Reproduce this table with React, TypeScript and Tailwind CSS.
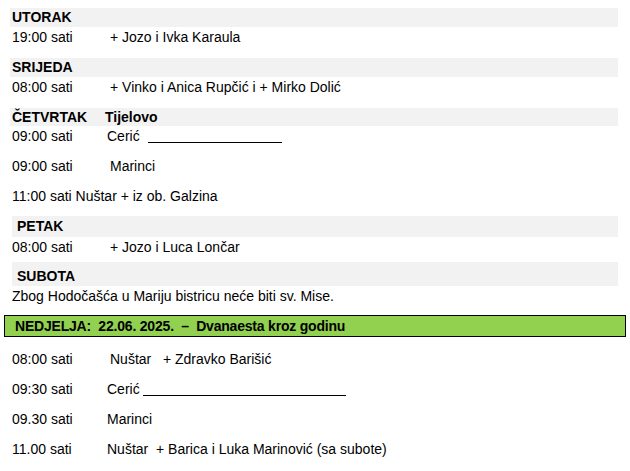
const font = { fontFamily: '"Liberation Sans", Arial, sans-serif' };

const DayBar = ({ children, className = "" }: { children: React.ReactNode; className?: string }) => (
  <div className={`flex items-center bg-[#f2f2f2] font-bold text-[14px] text-black ${className}`}>
    {children}
  </div>
);

const Row = ({ time, children, className = "" }: { time: string; children?: React.ReactNode; className?: string }) => (
  <div className={`flex items-center h-[20px] text-[14px] text-black ${className}`}>
    <span className="w-[98px] shrink-0">{time}</span>
    {children}
  </div>
);

export default function App() {
  return (
    <div className="w-[630px] h-[471px] bg-white overflow-hidden" style={font}>
      <div className="pt-[8px] pl-[10px] pr-[12px]">
        <DayBar className="h-[19px] pl-[2px]">UTORAK</DayBar>
        <Row time="19:00 sati" className="pl-[2px]">+ Jozo i Ivka Karaula</Row>

        <DayBar className="h-[19px] pl-[2px] mt-[11px]">SRIJEDA</DayBar>
        <Row time="08:00 sati" className="pl-[2px]">+ Vinko i Anica Rupčić i + Mirko Dolić</Row>

        <DayBar className="h-[18px] pl-[2px] mt-[11px]">
          <span className="w-[93px]">ČETVRTAK</span>
          <span>Tijelovo</span>
        </DayBar>
        <Row time="09:00 sati" className="pl-[2px]">
          <span className="-ml-[3px]">Cerić</span>
          <span className="ml-[8px] inline-block w-[134px] border-b border-black h-[14px]" />
        </Row>
        <Row time="09:00 sati" className="pl-[2px] mt-[10px]">Marinci</Row>
        <div className="flex items-center h-[20px] mt-[10px] pl-[2px] text-[14px]">11:00 sati Nuštar + iz ob. Galzina</div>

        <DayBar className="h-[21px] pl-[5px] mt-[10px] ml-[2px]">PETAK</DayBar>
        <Row time="08:00 sati" className="pl-[2px] h-[18px]">+ Jozo i Luca Lončar</Row>

        <DayBar className="h-[24px] pl-[5px] pt-[5px] mt-[5px] ml-[2px]">SUBOTA</DayBar>
        <div className="flex items-center h-[20px] pl-[2px] text-[14px]">
          Zbog Hodočašća u Mariju bistricu neće biti sv. Mise.
        </div>
      </div>

      <div className="mx-[4px] mt-[9px] h-[22px] w-[622px] bg-[#92d050] border border-black flex items-center pl-[10px] font-bold text-[14px] tracking-[-0.2px]">
        <span className="whitespace-pre">NEDJELJA:  22.06. 2025.  –  Dvanaesta kroz godinu</span>
      </div>

      <div className="pl-[12px] pt-[12px] text-[14px]">
        <div className="flex items-center h-[20px]">
          <span className="w-[98px]">08:00 sati</span>
          <span className="whitespace-pre">Nuštar   + Zdravko Barišić</span>
        </div>
        <div className="flex items-center h-[20px] mt-[10px]">
          <span className="w-[95px]">09:30 sati</span>
          <span>Cerić</span>
          <span className="ml-[3px] inline-block w-[203px] border-b border-black h-[14px]" />
        </div>
        <div className="flex items-center h-[20px] mt-[10px]">
          <span className="w-[95px]">09.30 sati</span>
          <span>Marinci</span>
        </div>
        <div className="flex items-center h-[20px] mt-[10px]">
          <span className="w-[95px]">11.00 sati</span>
          <span className="whitespace-pre">Nuštar  + Barica i Luka Marinović (sa subote)</span>
        </div>
      </div>
    </div>
  );
}
